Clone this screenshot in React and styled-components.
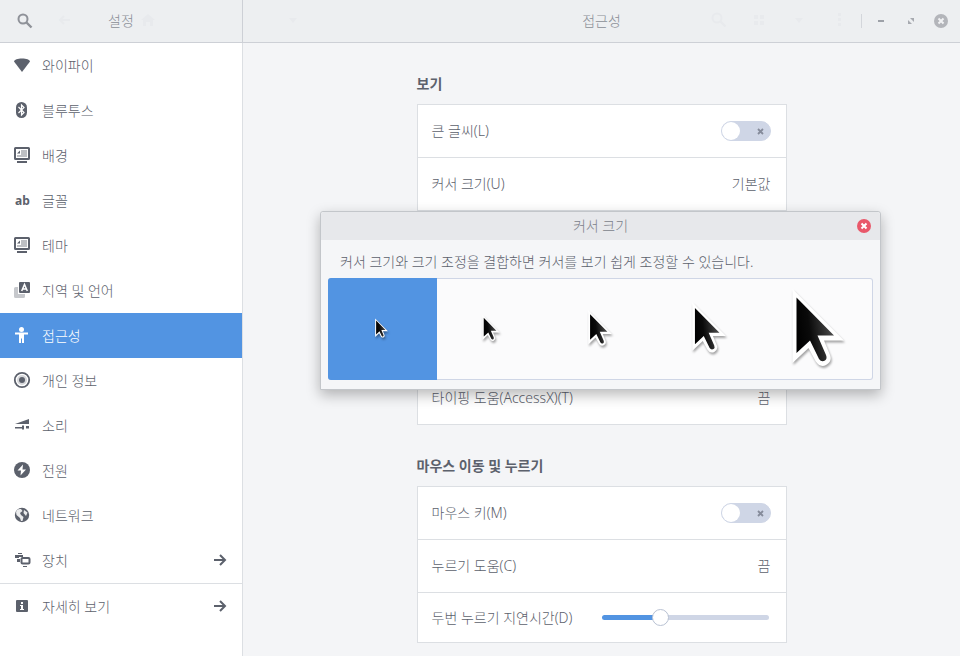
import React, { useState } from "react";
import styled, { createGlobalStyle } from "styled-components";

const INK = "#5c616c";
const BLUE = "#5294e2";
const LINE = "#dcdfe3";
const TRACK = "#cfd6e6";

const GlobalStyle = createGlobalStyle`
  *, *::before, *::after { box-sizing: border-box; }
  body {
    margin: 0;
    background: #f4f5f7;
    color: ${INK};
    font-family: "Noto Sans", "Noto Sans CJK KR", sans-serif;
    font-size: 14px;
    font-weight: 300;
    line-height: 20px;
  }
  button, input { font: inherit; color: inherit; }
  svg { display: block; }
`;

const Window = styled.div`
  display: grid;
  grid-template-columns: 243px minmax(0, 1fr);
  grid-template-rows: 43px minmax(0, 1fr);
  min-height: 100vh;
`;

const HeaderPane = styled.header`
  position: relative;
  display: grid;
  grid-template-columns: 1fr auto 1fr;
  align-items: center;
  padding: 0 12px;
  background: #edeff1;
  border-bottom: 1px solid #cdd0d6;
  border-right: ${(p) => (p.$divided ? "1px solid #cdd0d6" : "0")};
`;

const HeaderTitle = styled.h1`
  grid-column: 2;
  margin: 0;
  font-size: 14px;
  font-weight: 300;
  line-height: 20px;
  color: #8a8e96;
`;

const IconButton = styled.button`
  display: grid;
  place-items: center;
  width: 18px;
  height: 18px;
  padding: 0;
  border: 0;
  background: none;
`;

const SearchButton = styled(IconButton)`
  width: 26px;
  height: 26px;
  color: #8f9299;
`;

const WindowButton = styled(IconButton)`
  width: 16px;
  flex: none;
`;

const WindowControls = styled.div`
  grid-column: 3;
  display: flex;
  align-items: center;
  justify-content: flex-end;
  gap: 14px;
`;

const ControlDivider = styled.span`
  width: 1px;
  height: 14px;
  margin-right: -4px;
  background: #d3d6db;
`;

const Ghosts = styled.div`
  position: absolute;
  top: 11px;
  left: ${(p) => p.$left}px;
  display: flex;
  align-items: center;
  gap: ${(p) => p.$gap}px;
  color: #e8eaed;
  pointer-events: none;
`;

const Sidebar = styled.nav`
  background: #fff;
  border-right: 1px solid ${LINE};
`;

const NavList = styled.ul`
  margin: 0;
  padding: 0;
  list-style: none;
`;

const NavItem = styled.li`
  border-top: ${(p) => (p.$separated ? `1px solid ${LINE}` : "0")};
`;

const NavLink = styled.a`
  display: flex;
  align-items: center;
  gap: 11px;
  height: 45px;
  padding: 0 13px 1px;
  color: ${(p) => (p.$active ? "#fff" : INK)};
  background: ${(p) => (p.$active ? BLUE : "transparent")};
  text-decoration: none;
`;

const NavLabel = styled.span`
  flex: 1;
  padding-top: 1px;
`;

const Main = styled.main`
  position: relative;
  padding: 31px 20px 13px;
`;

const Section = styled.section`
  max-width: 370px;
  margin: 0 auto 31px;
  &:last-of-type { margin-bottom: 0; }
`;

const SectionTitle = styled.h2`
  margin: 0 0 10px;
  font-size: 14px;
  font-weight: 700;
  line-height: 20px;
`;

const Card = styled.div`
  background: #fff;
  border: 1px solid ${LINE};
`;

const rowHeights = { regular: 53, compact: 49, tall: 161 };

const Row = styled.div`
  display: flex;
  align-items: center;
  gap: 30px;
  width: 100%;
  height: ${(p) => rowHeights[p.$kind || "regular"]}px;
  padding: 0 15px 0 14px;
  border: 0;
  border-bottom: 1px solid ${LINE};
  background: none;
  text-align: left;
  &:last-child {
    height: ${(p) => (p.$kind === "compact" ? 49 : 52)}px;
    border-bottom: 0;
  }
`;

const RowLabel = styled.span`
  flex: ${(p) => (p.$fixed ? "none" : 1)};
`;

const SwitchBox = styled.span`
  position: relative;
  width: 50px;
  height: 20px;
`;

const SwitchInput = styled.input`
  appearance: none;
  display: block;
  width: 50px;
  height: 20px;
  margin: 0;
  border: 1px solid ${TRACK};
  border-radius: 10px;
  background: ${TRACK};
  &::before {
    content: "";
    display: block;
    width: 18px;
    height: 18px;
    border-radius: 9px;
    background: #fff;
  }
  &:checked { background: ${BLUE}; border-color: ${BLUE}; }
  &:checked::before { margin-left: 30px; }
`;

const SwitchMark = styled.svg`
  position: absolute;
  top: 7px;
  right: 7px;
  pointer-events: none;
`;

const Slider = styled.input`
  appearance: none;
  flex: 1;
  min-width: 0;
  height: 18px;
  margin: 0 2px 0 0;
  background: transparent;
  &::-webkit-slider-runnable-track {
    height: 5px;
    border-radius: 3px;
    background: linear-gradient(90deg, ${BLUE} 34%, ${TRACK} 34%);
  }
  &::-webkit-slider-thumb {
    appearance: none;
    width: 17px;
    height: 17px;
    margin-top: -6px;
    border: 1px solid #b9c2d3;
    border-radius: 9px;
    background: #fff;
  }
`;

const DialogLayer = styled.div`
  position: absolute;
  inset: 168px 0 auto;
  display: flex;
  justify-content: center;
`;

const Dialog = styled.div`
  width: 561px;
  margin-right: 2px;
  border: 1px solid #c3c6ca;
  border-radius: 3px 3px 0 0;
  background: #f5f6f8;
  box-shadow: 0 5px 14px rgba(0, 0, 0, 0.28);
`;

const DialogBar = styled.div`
  display: grid;
  grid-template-columns: 1fr auto 1fr;
  align-items: center;
  height: 28px;
  padding: 0 7px;
  border-radius: 3px 3px 0 0;
  background: #e7e8eb;
`;

const DialogTitle = styled.h2`
  grid-column: 2;
  margin: 0;
  font-size: 14px;
  font-weight: 300;
  line-height: 20px;
  color: #7b7f8a;
`;

const DialogClose = styled(IconButton)`
  justify-self: end;
`;

const DialogText = styled.p`
  margin: 0;
  padding: 12px 19px 6px;
`;

const CursorList = styled.div`
  display: grid;
  grid-template-columns: repeat(5, 1fr);
  margin: 0 7px 9px;
  border-radius: 3px;
  background: #fbfbfc;
  box-shadow: inset 0 0 0 1px ${TRACK};
`;

const CursorOption = styled.button`
  display: grid;
  place-items: center;
  height: 102px;
  padding: 0 2px 3px 0;
  border: 0;
  border-radius: 3px 0 0 3px;
  background: ${(p) => (p.$selected ? BLUE : "transparent")};
`;

const CursorDrawing = styled.svg`
  overflow: visible;
  filter: drop-shadow(1px 2px 1px rgba(0, 0, 0, 0.35));
`;

function Cursor({ width, height }) {
  const shade = `shade-${height}`;
  return (
    <CursorDrawing width={width} height={height} viewBox="0 0 52 77" aria-hidden="true">
      <defs>
        <linearGradient id={shade} x1="0" y1="0.6" x2="1" y2="0.4">
          <stop offset="0" stopColor="#000" />
          <stop offset="0.35" stopColor="#0a0a0a" />
          <stop offset="0.9" stopColor="#454545" />
        </linearGradient>
      </defs>
      <path d="M0.5 0V74L16.500 59L23.500 72Q28 79 34 76Q40.500 72 38 66L32 51.500H52Z" fill="#fff" />
      <path d="M4.500 8.500V64L18 51.500L27 70Q29.500 73.500 33 71.500Q35.500 69.500 34 66L25.500 46.500H42Z" fill={`url(#${shade})`} />
    </CursorDrawing>
  );
}

const iconPaths = {
  search: <><circle cx="7" cy="7" r="4.500" fill="none" stroke="currentColor" strokeWidth="2" /><path d="M10.500 10.500L15.500 15.500" stroke="currentColor" strokeWidth="2.400" /></>,
  wifi: <path d="M9 16L1 5.500C1.500 3.500 4.500 2.500 9 2.500S16.500 3.500 17 5.500Z" />,
  bluetooth: <><rect x="3" y="1" width="11" height="16" rx="5.500" /><path d="M5.500 6L11 11.500L8.500 14V4L11 6.500L5.500 12" fill="none" stroke="#fff" strokeWidth="1.200" /></>,
  display: <><path fillRule="evenodd" d="M2.500 1H15.500Q17 1 17 2.500V12.500Q17 14 15.500 14H2.500Q1 14 1 12.500V2.500Q1 1 2.500 1ZM3 3V12H15V3Z" /><path d="M8 4H14V11H4V9H8Z" opacity=".4" /><path d="M4 7.500L7 4.500V7.500Z" /><path d="M4 15H14V17H4Z" /></>,
  language: <><path d="M2.500 6H5V13H12V15.500Q12 17 10.500 17H2.500Q1 17 1 15.500V7.500Q1 6 2.500 6Z" opacity=".35" /><rect x="6" y="1" width="11" height="11" rx="1" /><path d="M8.700 10L11.500 3.500L14.300 10M9.700 8H13.300" fill="none" stroke="#fff" strokeWidth="1.500" /></>,
  person: <><circle cx="8.500" cy="3.500" r="2.500" /><path d="M2 6.500H15V8.500H11V17H9V12.500H8V17H6V8.500H2Z" /></>,
  privacy: <><circle cx="9" cy="9" r="7.200" fill="none" stroke="currentColor" strokeWidth="1.800" /><circle cx="9" cy="9" r="5" opacity=".25" /><circle cx="9" cy="9" r="3" /></>,
  sound: <><path d="M2 8L16 3V8Z" /><path d="M2 11H9V9.500H11V13.500H9V12.500H2ZM13 10H16V12.500H13Z" /></>,
  power: <><circle cx="9" cy="9" r="8" /><path d="M10 3.500L4.500 9.500H8L7.500 14.500L13 8.500H9.500Z" fill="#fff" /></>,
  globe: <><circle cx="9" cy="9" r="7.200" /><path d="M4 4Q6 2.500 8 3L9.500 5L7 7L8 9L10.500 11L9.500 15H8L7 12L3.500 9L3 6ZM11 4L14.500 6.500L13 10L10.500 7Z" fill="#fff" opacity=".88" /></>,
  devices: <><path d="M5 2H9V3H5ZM2 4H10V6H6V7H2ZM4 8H7V11H4ZM10 15H14V16H10Z" /><rect x="8.500" y="7" width="8" height="5.500" rx="1" fill="none" stroke="currentColor" strokeWidth="2" /></>,
  info: <><rect x="3" y="3" width="12" height="12" rx="1" /><path d="M8 5H10V7H8ZM7 8H10V12H11V13H7V12H8V9H7Z" fill="#fff" /></>,
  arrow: <path d="M3 9H14M9 4L14 9L9 14" fill="none" stroke="currentColor" strokeWidth="2" />,
  back: <path d="M14 9H4M8 5L4 9L8 13" fill="none" stroke="currentColor" strokeWidth="2" />,
  home: <path d="M2 9L9 3L16 9H14V15H11V11H7V15H4V9Z" />,
  caret: <path d="M5 7H13L9 12Z" />,
  grid: <path d="M4 4H8V8H4ZM10 4H14V8H10ZM4 10H8V14H4ZM10 10H14V14H10Z" />,
  dots: <path d="M8 2H11V5H8ZM8 7H11V10H8ZM8 12H11V15H8Z" />,
  minimize: <path d="M6 8H12V10H6Z" fill="#9da1a8" />,
  maximize: <path d="M8 6H12V10ZM6 8L10 12H6Z" fill="#a7aab0" />,
};

function Icon({ name }) {
  return (
    <svg width="18" height="18" viewBox="0 0 18 18" fill="currentColor" aria-hidden="true">
      {name === "fonts" ? (
        <text x="2" y="14" fontFamily="Noto Sans, sans-serif" fontSize="12" fontWeight="700">ab</text>
      ) : iconPaths[name]}
    </svg>
  );
}

function CloseMark({ color, cross }) {
  return (
    <svg width="18" height="18" viewBox="0 0 18 18" aria-hidden="true">
      <circle cx="9" cy="9" r="7" fill={color} />
      <path d="M6.500 6.500L11.500 11.500M11.500 6.500L6.500 11.500" stroke={cross} strokeWidth="2" />
    </svg>
  );
}

const navItems = [
  { icon: "wifi", label: "와이파이" },
  { icon: "bluetooth", label: "블루투스" },
  { icon: "display", label: "배경" },
  { icon: "fonts", label: "글꼴" },
  { icon: "display", label: "테마" },
  { icon: "language", label: "지역 및 언어" },
  { icon: "person", label: "접근성", active: true },
  { icon: "privacy", label: "개인 정보" },
  { icon: "sound", label: "소리" },
  { icon: "power", label: "전원" },
  { icon: "globe", label: "네트워크" },
  { icon: "devices", label: "장치", submenu: true },
  { icon: "info", label: "자세히 보기", submenu: true, separated: true },
];

const cursorSizes = [
  { width: 13, height: 20 },
  { width: 18, height: 26 },
  { width: 24, height: 36 },
  { width: 34, height: 51 },
  { width: 52, height: 77 },
];

function SwitchRow({ label }) {
  return (
    <Row as="label">
      <RowLabel>{label}</RowLabel>
      <SwitchBox>
        <SwitchInput type="checkbox" role="switch" />
        <SwitchMark width="7" height="7" viewBox="0 0 7 7" aria-hidden="true">
          <path d="M1 1L6 6M6 1L1 6" stroke="#858b9a" strokeWidth="1.800" />
        </SwitchMark>
      </SwitchBox>
    </Row>
  );
}

function ValueRow({ label, value }) {
  return (
    <Row as="button" type="button">
      <RowLabel>{label}</RowLabel>
      <span>{value}</span>
    </Row>
  );
}

export default function App() {
  const [selected, setSelected] = useState(0);
  return (
    <Window>
      <GlobalStyle />
      <HeaderPane $divided>
        <Ghosts $left={56} $gap={65} aria-hidden="true">
          <Icon name="back" />
          <Icon name="home" />
        </Ghosts>
        <SearchButton type="button" aria-label="검색"><Icon name="search" /></SearchButton>
        <HeaderTitle>설정</HeaderTitle>
      </HeaderPane>
      <HeaderPane>
        <Ghosts $left={41} $gap={22} aria-hidden="true">
          <Icon name="caret" />
        </Ghosts>
        <Ghosts $left={467} $gap={22} aria-hidden="true">
          <Icon name="search" />
          <Icon name="grid" />
          <Icon name="caret" />
          <Icon name="dots" />
        </Ghosts>
        <HeaderTitle as="h2">접근성</HeaderTitle>
        <WindowControls>
          <ControlDivider />
          <WindowButton type="button" aria-label="최소화"><Icon name="minimize" /></WindowButton>
          <WindowButton type="button" aria-label="최대화"><Icon name="maximize" /></WindowButton>
          <WindowButton type="button" aria-label="닫기"><CloseMark color="#b3b5ba" cross="#f1f2f4" /></WindowButton>
        </WindowControls>
      </HeaderPane>
      <Sidebar>
        <NavList>
          {navItems.map((item) => (
            <NavItem key={item.label} $separated={item.separated}>
              <NavLink href="#" $active={item.active} aria-current={item.active ? "page" : undefined}>
                <Icon name={item.icon} />
                <NavLabel>{item.label}</NavLabel>
                {item.submenu && <Icon name="arrow" />}
              </NavLink>
            </NavItem>
          ))}
        </NavList>
      </Sidebar>
      <Main>
        <Section>
          <SectionTitle>보기</SectionTitle>
          <Card>
            <SwitchRow label="큰 글씨(L)" />
            <ValueRow label="커서 크기(U)" value="기본값" />
            <Row $kind="tall" />
            <ValueRow label="타이핑 도움(AccessX)(T)" value="끔" />
          </Card>
        </Section>
        <Section>
          <SectionTitle>마우스 이동 및 누르기</SectionTitle>
          <Card>
            <SwitchRow label="마우스 키(M)" />
            <ValueRow label="누르기 도움(C)" value="끔" />
            <Row as="label" $kind="compact">
              <RowLabel $fixed>두번 누르기 지연시간(D)</RowLabel>
              <Slider type="range" min="0" max="100" defaultValue="33" />
            </Row>
          </Card>
        </Section>
        <DialogLayer>
          <Dialog role="dialog" aria-labelledby="cursor-size-title">
            <DialogBar>
              <DialogTitle id="cursor-size-title">커서 크기</DialogTitle>
              <DialogClose type="button" aria-label="닫기"><CloseMark color="#e9586a" cross="#fff" /></DialogClose>
            </DialogBar>
            <DialogText>커서 크기와 크기 조정을 결합하면 커서를 보기 쉽게 조정할 수 있습니다.</DialogText>
            <CursorList>
              {cursorSizes.map((size, index) => (
                <CursorOption
                  key={size.height}
                  type="button"
                  aria-label={`커서 크기 ${index + 1}`}
                  aria-pressed={selected === index}
                  $selected={selected === index}
                  onClick={() => setSelected(index)}
                >
                  <Cursor width={size.width} height={size.height} />
                </CursorOption>
              ))}
            </CursorList>
          </Dialog>
        </DialogLayer>
      </Main>
    </Window>
  );
}
